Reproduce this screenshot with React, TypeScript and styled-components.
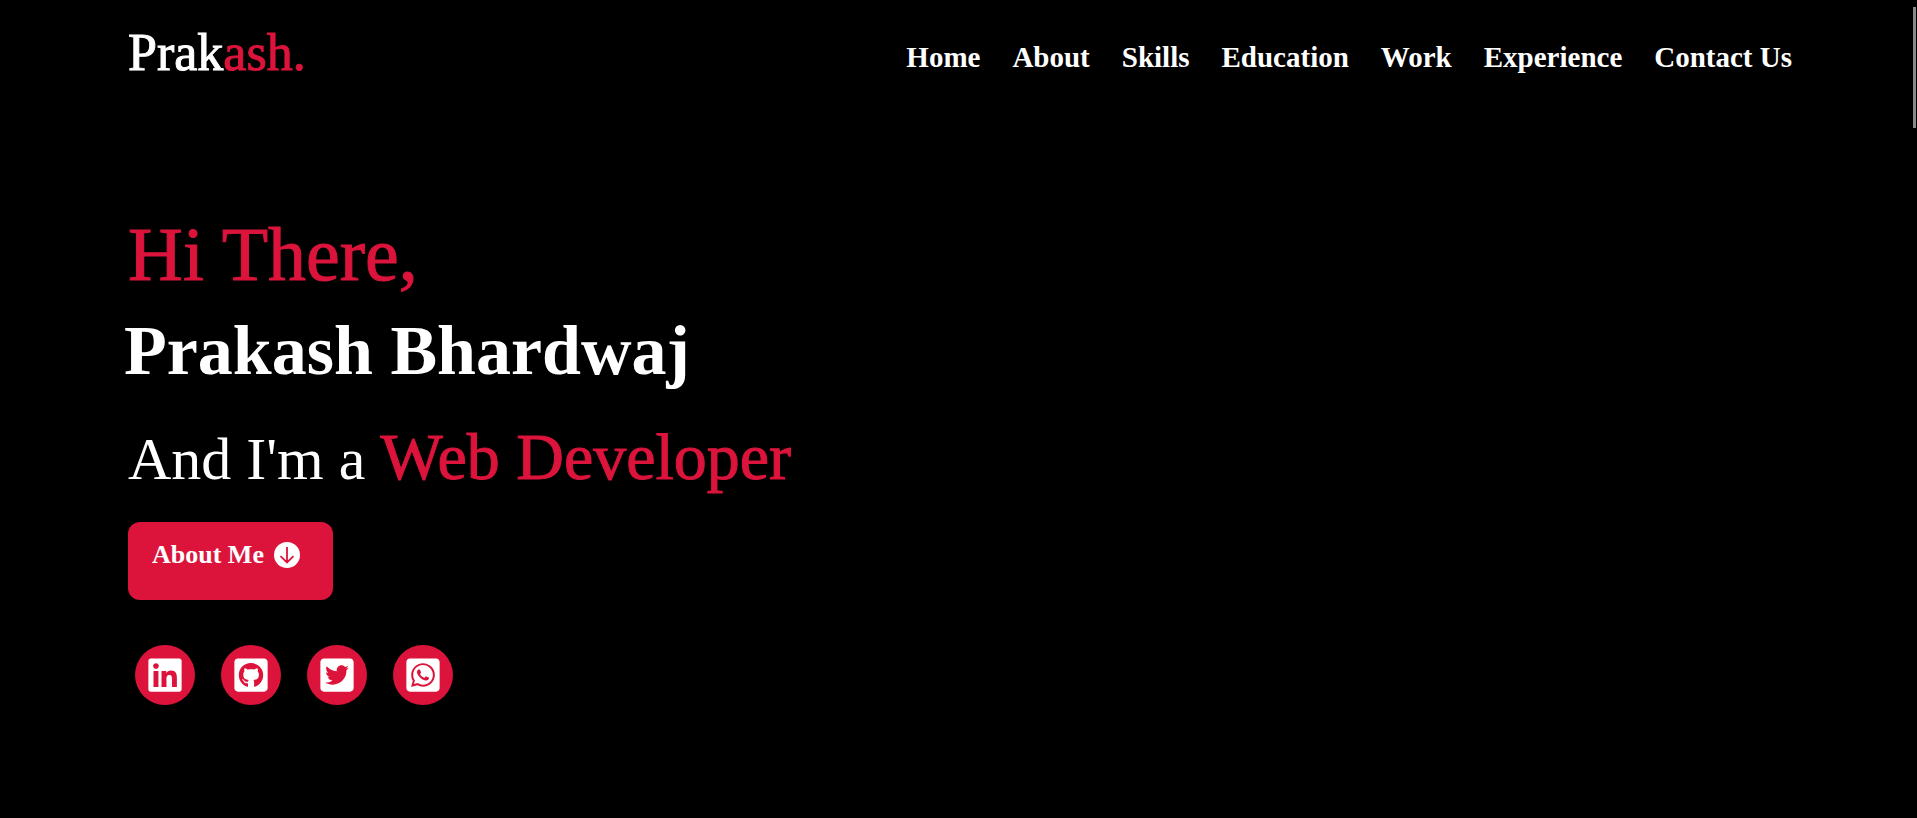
import React from "react";
import styled, { createGlobalStyle } from "styled-components";
import { FaLinkedin, FaGithubSquare, FaTwitterSquare, FaWhatsappSquare } from "react-icons/fa";

const crimson = "#dc143c";

const GlobalStyle = createGlobalStyle`
  * {
    box-sizing: border-box;
  }
  body {
    margin: 0;
    background: #000;
    color: #fff;
    font-family: "Liberation Serif", "Times New Roman", serif;
  }
`;

const Page = styled.div`
  position: relative;
  min-height: 100vh;
`;

const Header = styled.header`
  display: flex;
  align-items: flex-start;
  justify-content: space-between;
  padding: 24px 125px 0 128px;
`;

const Logo = styled.a`
  color: #fff;
  font-size: 52px;
  line-height: 58px;
  text-decoration: none;
  -webkit-text-stroke: 1px #fff;
`;

const Accent = styled.span<{ $size?: number }>`
  color: ${crimson};
  font-size: ${(p) => (p.$size ? `${p.$size}px` : "inherit")};
  line-height: 1;
  -webkit-text-stroke: 1px ${crimson};
`;

const Nav = styled.nav`
  display: flex;
  gap: 32px;
`;

const NavLink = styled.a`
  color: #fff;
  font-size: 29px;
  font-weight: 700;
  line-height: 66px;
  text-decoration: none;
`;

const Hero = styled.main`
  display: flex;
  flex-direction: column;
  align-items: flex-start;
  padding: 116px 128px 0;
`;

const Greeting = styled.p`
  margin: 0;
  color: ${crimson};
  font-size: 76px;
  line-height: 96px;
  -webkit-text-stroke: 1px ${crimson};
`;

const Name = styled.h1`
  margin: 0 0 0 -4px;
  font-size: 70px;
  line-height: 98px;
`;

const Role = styled.h2`
  margin: 19px 0 23px;
  font-size: 60px;
  font-weight: 400;
  line-height: 80px;
`;

const AboutButton = styled.button`
  display: flex;
  align-items: center;
  gap: 10px;
  height: 78px;
  padding: 0 33px 12px 24px;
  border: 0;
  border-radius: 12px;
  background: ${crimson};
  color: #fff;
  font: 700 26px "Liberation Serif", "Times New Roman", serif;
  cursor: pointer;
`;

const Socials = styled.div`
  display: flex;
  gap: 26px;
  padding: 45px 7px 0;
`;

const SocialLink = styled.a`
  display: flex;
  align-items: center;
  justify-content: center;
  width: 60px;
  height: 60px;
  border-radius: 50%;
  background: ${crimson};
  color: #fff;
  font-size: 38px;
`;

const ScrollThumb = styled.div`
  position: absolute;
  top: 7px;
  right: 1px;
  width: 3px;
  height: 121px;
  background: #888;
`;

const links = ["Home", "About", "Skills", "Education", "Work", "Experience", "Contact Us"];

const socials = [
  { name: "LinkedIn", Icon: FaLinkedin },
  { name: "GitHub", Icon: FaGithubSquare },
  { name: "Twitter", Icon: FaTwitterSquare },
  { name: "WhatsApp", Icon: FaWhatsappSquare },
];

function ArrowDownCircle() {
  return (
    <svg width="26" height="26" viewBox="0 0 26 26" aria-hidden="true">
      <circle cx="13" cy="13" r="13" fill="#fff" />
      <path d="M13 5v15.5M6.5 14.2l6.5 6.3 6.5-6.3" fill="none" stroke={crimson} strokeWidth="1.8" />
    </svg>
  );
}

export default function App() {
  return (
    <Page>
      <GlobalStyle />
      <Header>
        <Logo href="#">
          Prak<Accent>ash.</Accent>
        </Logo>
        <Nav>
          {links.map((label) => (
            <NavLink key={label} href="#">
              {label}
            </NavLink>
          ))}
        </Nav>
      </Header>
      <Hero>
        <Greeting>Hi There,</Greeting>
        <Name>Prakash Bhardwaj</Name>
        <Role>
          And I'm a <Accent $size={66}>Web Developer</Accent>
        </Role>
        <AboutButton type="button">
          About Me <ArrowDownCircle />
        </AboutButton>
        <Socials>
          {socials.map(({ name, Icon }) => (
            <SocialLink key={name} href="#" aria-label={name}>
              <Icon />
            </SocialLink>
          ))}
        </Socials>
      </Hero>
      <ScrollThumb />
    </Page>
  );
}
